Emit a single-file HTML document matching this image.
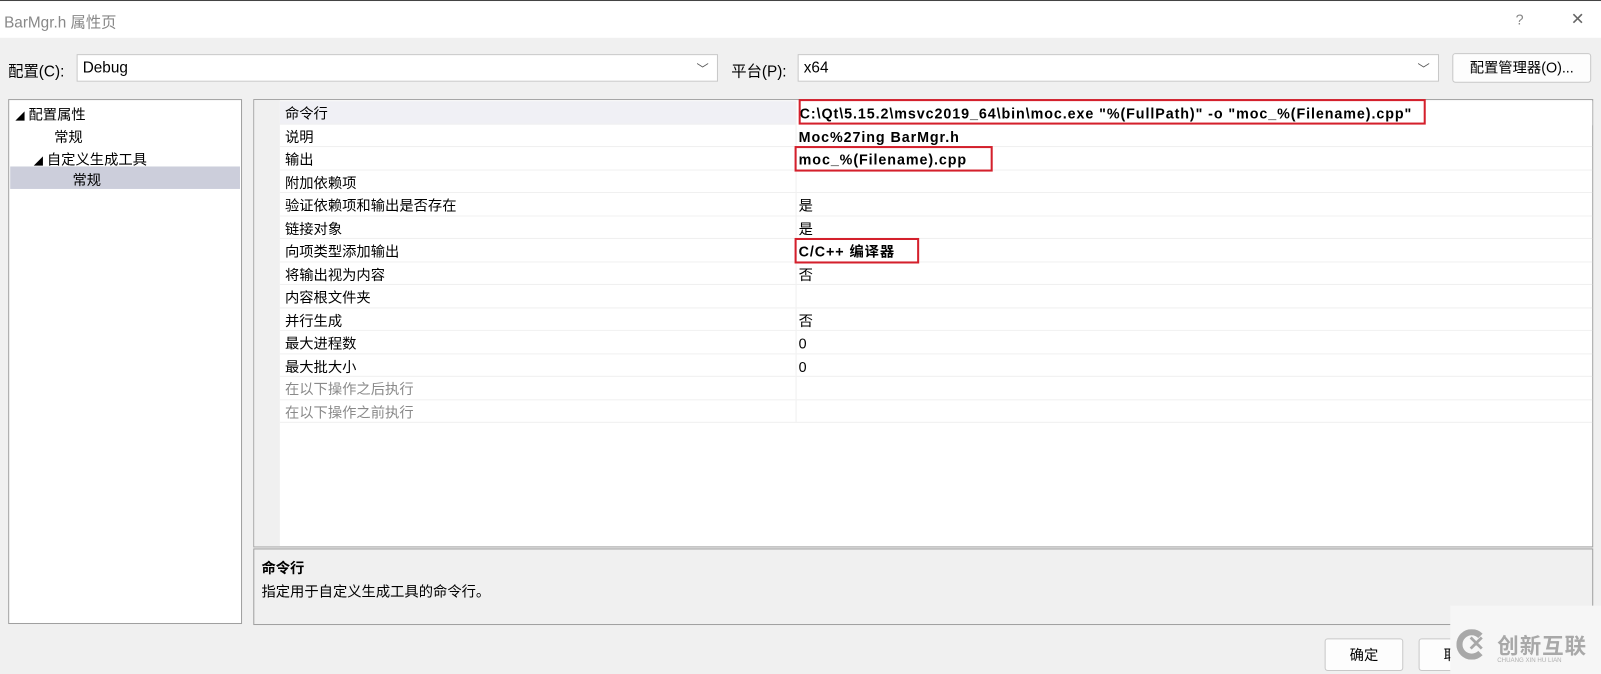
<!DOCTYPE html>
<html><head><meta charset="utf-8">
<style>
*{box-sizing:border-box;margin:0;padding:0}
html,body{width:1601px;height:674px;overflow:hidden;background:#f0f0f0}
#w{position:absolute;left:0;top:0;width:1568px;height:660px;transform:scale(1.0213);transform-origin:0 0;font-family:"Liberation Sans","Noto Sans CJK SC",sans-serif;font-size:14px;color:#000}
.a{position:absolute}
.title{left:0;top:0;width:1568px;height:37px;background:#fff;border-top:1px solid #444}
.combo{background:#fff;border:1px solid #c8c8c8;height:27px;padding-left:5px;line-height:25px;font-size:15px}
.chev{position:absolute;right:8px;top:2px;color:#555;font-size:12px}
.btn{background:#fdfdfd;border:1px solid #c8c8c8;border-radius:3px;text-align:center;font-size:14px}
.panel{background:#fff;border:1px solid #a0a0a0}
.row{position:absolute;left:25px;width:1285px;height:22.5px;border-bottom:1px solid #f0f0f0;line-height:24px}
.row .n{position:absolute;left:5px}
.row .v{position:absolute;left:508px}
.row .v.b{letter-spacing:0.9px}
.row .sep{position:absolute;left:505px;top:0;width:1px;height:22px;background:#f0f0f0}
.b{font-weight:bold}
.g{color:#8a8a8a}
.red{position:absolute;border:2px solid #d4202c}
</style></head><body><div id="w">
<div class="a title"><div class="a" style="left:4px;top:10px;color:#888;font-size:15px">BarMgr.h 属性页</div>
<div class="a" style="left:1484px;top:10px;color:#888;font-size:14px">?</div>
<div class="a" style="left:1538px;top:8px;color:#666;font-size:16px">✕</div></div>

<div class="a" style="left:8px;top:59px;font-size:15px">配置(C):</div>
<div class="a combo" style="left:75px;top:53px;width:628px">Debug<span class="chev">﹀</span></div>
<div class="a" style="left:716px;top:59px;font-size:15px">平台(P):</div>
<div class="a combo" style="left:781px;top:53px;width:628px">x64<span class="chev">﹀</span></div>
<div class="a btn" style="left:1422px;top:52px;width:136px;height:29px;line-height:27px">配置管理器(O)...</div>

<div class="a panel" style="left:8px;top:97px;width:229px;height:514px">
<div class="a" style="left:6px;top:4px;font-size:14px"><span style="font-size:9px">◢</span> 配置属性</div>
<div class="a" style="left:44px;top:26px">常规</div>
<div class="a" style="left:24px;top:48px"><span style="font-size:9px">◢</span> 自定义生成工具</div>
<div class="a" style="left:1px;top:65px;width:225px;height:22px;background:#cccedb"></div>
<div class="a" style="left:62px;top:68px">常规</div>
</div>

<div class="a panel" style="left:248px;top:97px;width:1312px;height:439px">
<div class="a" style="left:0;top:0;width:25px;height:437px;background:#f0f0f0"></div>
<div class="row" style="top:1px;background:#f0f0f5"><span class="n">命令行</span><span class="sep"></span><span class="v b" style="background:#fff;left:506px;padding-left:3px;width:779px">C:\Qt\5.15.2\msvc2019_64\bin\moc.exe "%(FullPath)" -o "moc_%(Filename).cpp"</span></div>
<div class="row" style="top:23.5px"><span class="n">说明</span><span class="sep"></span><span class="v b">Moc%27ing BarMgr.h</span></div>
<div class="row" style="top:46px"><span class="n">输出</span><span class="sep"></span><span class="v b">moc_%(Filename).cpp</span></div>
<div class="row" style="top:68.5px"><span class="n">附加依赖项</span><span class="sep"></span></div>
<div class="row" style="top:91px"><span class="n">验证依赖项和输出是否存在</span><span class="sep"></span><span class="v">是</span></div>
<div class="row" style="top:113.5px"><span class="n">链接对象</span><span class="sep"></span><span class="v">是</span></div>
<div class="row" style="top:136px"><span class="n">向项类型添加输出</span><span class="sep"></span><span class="v b">C/C++ 编译器</span></div>
<div class="row" style="top:158.5px"><span class="n">将输出视为内容</span><span class="sep"></span><span class="v">否</span></div>
<div class="row" style="top:181px"><span class="n">内容根文件夹</span><span class="sep"></span></div>
<div class="row" style="top:203.5px"><span class="n">并行生成</span><span class="sep"></span><span class="v">否</span></div>
<div class="row" style="top:226px"><span class="n">最大进程数</span><span class="sep"></span><span class="v">0</span></div>
<div class="row" style="top:248.5px"><span class="n">最大批大小</span><span class="sep"></span><span class="v">0</span></div>
<div class="row g" style="top:271px"><span class="n">在以下操作之后执行</span><span class="sep"></span></div>
<div class="row g" style="top:293.5px"><span class="n">在以下操作之前执行</span><span class="sep"></span></div>
</div>

<div class="red" style="left:782px;top:97px;width:614px;height:25px"></div>
<div class="red" style="left:778px;top:143px;width:194px;height:25px"></div>
<div class="red" style="left:778px;top:233px;width:122px;height:25px"></div>

<div class="a" style="left:248px;top:537px;width:1312px;height:75px;border:1px solid #a0a0a0;background:#f0f0f0">
<div class="a b" style="left:7px;top:8px">命令行</div>
<div class="a" style="left:7px;top:31px">指定用于自定义生成工具的命令行。</div>
</div>

<div class="a btn" style="left:1297px;top:625px;width:77px;height:32px;line-height:30px">确定</div>
<div class="a btn" style="left:1389px;top:625px;width:77px;height:32px;line-height:30px">取消</div>

<div class="a" style="left:1420px;top:593px;width:148px;height:67px;background:#f6f6f6"></div>
<div class="a" style="left:1426px;top:616px;width:30px;height:30px;border-radius:50%;border:6px solid #a8a8a8;border-right-color:transparent"></div>
<div class="a" style="left:1437px;top:618px;color:#a8a8a8;font-weight:bold;font-size:20px">✕</div>
<div class="a" style="left:1466px;top:617px;color:#a8a8a8;font-size:21px;font-weight:bold;letter-spacing:1px">创新互联</div>
<div class="a" style="left:1466px;top:644px;color:#b0b0b0;font-size:6px">CHUANG XIN HU LIAN</div>
</div></body></html>
